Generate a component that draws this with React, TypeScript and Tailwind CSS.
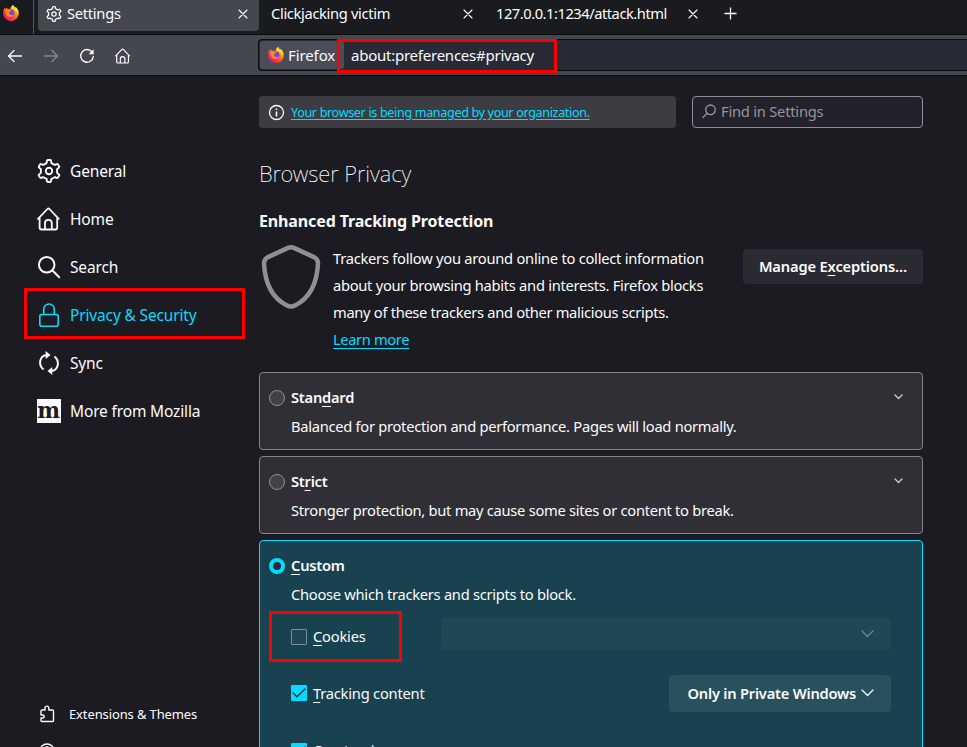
import type { ReactNode } from "react";

function Gear({ size }: { size: number }) {
  const petals = 6;
  const points: string[] = [];
  const step = 360 / petals;
  const at = (r: number, deg: number) => {
    const a = ((deg - 90) * Math.PI) / 180;
    return `${(12 + r * Math.cos(a)).toFixed(2)} ${(12 + r * Math.sin(a)).toFixed(2)}`;
  };
  for (let i = 0; i < petals; i++) {
    const c = i * step;
    points.push(`${i === 0 ? "M" : "L"}${at(8.6, c - 15)}`);
    points.push(`Q${at(11.4, c - 12)} ${at(11.1, c - 5)}`);
    points.push(`L${at(11.1, c + 5)}`);
    points.push(`Q${at(11.4, c + 12)} ${at(8.6, c + 15)}`);
    points.push(`Q${at(7.8, c + 30)} ${at(8.6, c + step - 15)}`);
  }
  return (
    <svg width={size} height={size} viewBox="0 0 24 24" fill="none" stroke="currentColor" strokeWidth="1.9" strokeLinejoin="round">
      <path d={points.join(" ") + "Z"} />
      <circle cx="12" cy="12" r="3.2" />
    </svg>
  );
}

function House({ size }: { size: number }) {
  return (
    <svg width={size} height={size} viewBox="0 0 24 24" fill="none" stroke="currentColor" strokeWidth="1.8" strokeLinecap="round" strokeLinejoin="round">
      <path d="M1 11.800 10.400 2q1-.9 2 0l9.400 9.800M2.600 10.500v10q0 2 2 2h13.600q2 0 2-2v-10M8 22v-6q0-3.200 3.400-3.200t3.400 3.200v6" />
    </svg>
  );
}

function Magnifier() {
  return (
    <svg width="24" height="24" viewBox="0 0 24 24" fill="none" stroke="currentColor" strokeWidth="2" strokeLinecap="round">
      <circle cx="9.700" cy="9.700" r="7.800" />
      <path d="m15.500 15.500 6.700 6.700" />
    </svg>
  );
}

function Lock() {
  return (
    <svg width="24" height="24" viewBox="0 0 24 24" fill="none" stroke="currentColor" strokeWidth="1.600">
      <rect x="2.800" y="11.500" width="18.400" height="11.700" rx="2" />
      <path d="M6.700 11.500V6.300a5.300 5.300 0 0 1 10.600 0v5.200" />
    </svg>
  );
}

function SyncArrows() {
  return (
    <svg width="24" height="24" viewBox="0 0 24 24" fill="none" stroke="currentColor" strokeWidth="2">
      <path d="M10 4C2.800 4.500.6 13.500 6.500 18.600M14 20c7.200-.5 9.400-9.500 3.500-14.600" />
      <path d="M8.700 0v8L13.500 4zM15.300 24v-8L10.500 20z" fill="currentColor" stroke="none" />
    </svg>
  );
}

function MozillaMark() {
  return (
    <span className="flex h-6 w-6 items-center justify-center bg-[#fbfbfe] text-[#1c1b22]">
      <span className="-mt-[3px] font-['DejaVu_Serif',serif] text-[22px] leading-6 font-bold [transform:scaleX(0.98)]">m</span>
    </span>
  );
}

function FirefoxLogo() {
  return (
    <svg width="16" height="16" viewBox="0 0 16 16">
      <defs>
        <linearGradient id="flame" x1="0.85" y1="0.1" x2="0.2" y2="0.95">
          <stop offset="0" stopColor="#fff44f" />
          <stop offset="0.35" stopColor="#ff980e" />
          <stop offset="0.7" stopColor="#ff3647" />
          <stop offset="1" stopColor="#e31587" />
        </linearGradient>
      </defs>
      <path d="M10.300 0c.2 1.300 1 2 2 2.800l.2-1c1.800 1.400 3.300 3.700 3.300 6.500A7.800 7.800 0 0 1 8 16 7.800 7.800 0 0 1 .2 8.200c0-2.300.5-4 1.600-5.600l.4 1.500 1.500-1.700.6 1.500c1.300-.2 2 .1 2.900.7C7.300 2.700 8.300.8 10.300 0z" fill="url(#flame)" />
      <circle cx="8" cy="8" r="3.500" fill="#7542e5" />
      <path d="M2.500 5.200c1.600-.8 3.200-.7 4.500.1l1.500.2c-.2 1-1.200 1.300-2 1.500-.9.800-.5 2.200.8 2.800 1.100.5 2.300.2 3.300-.5-.4 2-2 2.800-3.700 2.600-3-.3-4.500-2.800-4.400-6.700z" fill="#ff8a16" />
      <path d="M10.300 0c.2 1.300 1 2 2 2.800 1.500 1.300 2.600 3.100 2.300 5.400-.6-2.300-2.300-3.300-3.900-4.100C9 3.200 9 1.400 10.300 0z" fill="#ffe226" />
    </svg>
  );
}

function Cross() {
  return (
    <svg width="10" height="10" viewBox="0 0 10 10" fill="none" stroke="currentColor" strokeWidth="1.100" strokeLinecap="round">
      <path d="m1 1 8 8M9 1 1 9" />
    </svg>
  );
}

function Chevron({ size }: { size: "small" | "large" }) {
  return size === "small" ? (
    <svg width="9" height="6" viewBox="0 0 9 6" fill="none" stroke="currentColor" strokeWidth="1.300" strokeLinecap="round" strokeLinejoin="round">
      <path d="m1 1 3.500 3.500L8 1" />
    </svg>
  ) : (
    <svg width="13" height="8" viewBox="0 0 13 8" fill="none" stroke="currentColor" strokeWidth="1.300" strokeLinecap="round" strokeLinejoin="round">
      <path d="m1 1 5.500 5.500L12 1" />
    </svg>
  );
}

function Key({ children }: { children: ReactNode }) {
  return <span className="underline decoration-1 underline-offset-[3px]">{children}</span>;
}

function NavItem({ icon, label, active }: { icon: ReactNode; label: string; active?: boolean }) {
  return (
    <a className={`flex h-12 shrink-0 items-center gap-[9px] text-[15.500px] tracking-[-0.15px] ${active ? "text-[#00ddff]" : "text-[#fbfbfe]"}`}>
      {icon}
      <span className="mt-0.5">{label}</span>
    </a>
  );
}

function Radio({ on }: { on?: boolean }) {
  return (
    <span className={on ? "mt-px h-4 w-4 rounded-full border-[4.5px] border-[#00ddff] bg-[#2b2a33]" : "mt-px h-4 w-4 rounded-full border border-[#8f8f94] bg-[#424147]"} />
  );
}

function Checkbox({ on }: { on?: boolean }) {
  return on ? (
    <span className="mt-px flex h-4 w-4 items-center justify-center rounded-[1px] bg-[#00ddff] text-[#2b2a33]">
      <svg width="14" height="10" viewBox="0 0 14 10" fill="none" stroke="currentColor" strokeWidth="1.300" strokeLinecap="round" strokeLinejoin="round">
        <path d="m1 4.700 4 4L13 1" />
      </svg>
    </span>
  ) : (
    <span className="mt-px h-4 w-4 rounded-[1px] border border-[#768f99] bg-[#224552]" />
  );
}

function OptionCard({ title, text }: { title: ReactNode; text: string }) {
  return (
    <section className="h-[78px] rounded-[4px] border border-[#858489] bg-[#312f36] px-[9px] pt-3">
      <div className="flex h-6 items-center">
        <Radio />
        <h3 className="ml-1.5 font-semibold tracking-[-0.25px]">{title}</h3>
        <span className="mr-[10px] ml-auto text-[#ceced2]"><Chevron size="small" /></span>
      </div>
      <p className="mt-[5px] ml-[22px] leading-6">{text}</p>
    </section>
  );
}

export default function App() {
  return (
    <div className="relative h-[747px] w-[967px] overflow-hidden bg-[#1c1b22] font-['Noto_Sans',sans-serif] text-[14.700px] tracking-[-0.28px] text-[#fbfbfe]">
      <header>
        <div className="flex h-[35px] items-start border-b border-[#0c0c0d] bg-[#1a1b1f]">
          <div className="flex h-[34px] w-[34px] items-start border-r border-[#55575c] pt-[5px] pl-[3px]">
            <FirefoxLogo />
          </div>
          <div className="ml-1 flex h-[31px] w-[221px] items-center rounded-b-[4px] bg-[#44474d] pr-[11px] pb-1 pl-2">
            <Gear size={16} />
            <span className="ml-[5px]">Settings</span>
            <span className="ml-auto"><Cross /></span>
          </div>
          <div className="flex h-[31px] w-[225px] items-center pr-[11px] pb-1 pl-3">
            <span className="tracking-[-0.34px]">Clickjacking victim</span>
            <span className="ml-auto"><Cross /></span>
          </div>
          <div className="flex h-[31px] w-[225px] items-center pr-[11px] pb-1 pl-3">
            <span className="tracking-[-0.47px]">127.0.0.1:1234/attack.html</span>
            <span className="ml-auto"><Cross /></span>
          </div>
          <svg className="mt-[7px] ml-[15px]" width="13" height="13" viewBox="0 0 13 13" fill="none" stroke="currentColor" strokeWidth="1.300">
            <path d="M6.500.5v12M.5 6.500h12" />
          </svg>
        </div>
        <div className="flex h-[41px] items-center border-b border-[#0c0c0d] bg-[#44474d]">
          <svg className="mt-px ml-[7px]" width="16" height="14" viewBox="0 0 16 14" fill="none" stroke="currentColor" strokeWidth="1.300" strokeLinecap="round" strokeLinejoin="round">
            <path d="M14.500 7H1.500M7 1.500 1.500 7 7 12.500" />
          </svg>
          <svg className="mt-px ml-5 text-[#85878b]" width="16" height="14" viewBox="0 0 16 14" fill="none" stroke="currentColor" strokeWidth="1.300" strokeLinecap="round" strokeLinejoin="round">
            <path d="M1.500 7h13M9 1.500 14.500 7 9 12.500" />
          </svg>
          <svg className="mt-px ml-5" width="16" height="16" viewBox="0 0 16 16" fill="none" stroke="currentColor" strokeWidth="1.400" strokeLinecap="round">
            <path d="M13 4A6.300 6.300 0 1 0 14.300 8.500" />
            <path d="M14.600 1.300v5H9.600z" fill="currentColor" stroke="none" />
          </svg>
          <span className="mt-px ml-5"><House size={16} /></span>
          <div className="ml-[127px] flex h-8 flex-1 items-center rounded-l-[4px] border border-r-0 border-[#0c0c0d] bg-[#282a36]">
            <div className="ml-px flex h-[28px] w-[84px] items-center rounded-[3px] bg-[#4b4d58] pl-2">
              <FirefoxLogo />
              <span className="ml-1 text-[15px] tracking-[-0.1px]">Firefox</span>
            </div>
            <span className="ml-[7px] text-[15px] tracking-[-0.24px]">about:preferences#privacy</span>
          </div>
        </div>
      </header>

      <div className="flex h-[671px]">
        <nav className="flex w-[259px] flex-col pt-[71px] pl-[37px]">
          <NavItem icon={<Gear size={24} />} label="General" />
          <NavItem icon={<House size={24} />} label="Home" />
          <NavItem icon={<Magnifier />} label="Search" />
          <NavItem icon={<Lock />} label="Privacy & Security" active />
          <NavItem icon={<SyncArrows />} label="Sync" />
          <NavItem icon={<MozillaMark />} label="More from Mozilla" />
          <div className="mt-[261px] flex h-9 shrink-0 items-center pl-[2px] text-[13px] tracking-[-0.12px]">
            <svg width="17" height="18" viewBox="0 0 17 18" fill="none" stroke="currentColor" strokeWidth="1.400" strokeLinejoin="round">
              <path d="M2 8V6q0-1 1-1h3V3a1.900 1.900 0 0 1 3.800 0v2h3.700q1 0 1 1v9.500q0 1-1 1H3q-1 0-1-1V13h1.700a1.500 1.500 0 0 0 0-3H2z" />
            </svg>
            <span className="mt-0.5 ml-[13px]">Extensions &amp; Themes</span>
          </div>
          <svg className="mt-[11px] ml-[2px] shrink-0" width="16" height="16" viewBox="0 0 16 16" fill="none" stroke="currentColor" strokeWidth="1.400">
            <circle cx="8" cy="8" r="7" />
            <path d="M5.500 6.500a2.500 2.500 0 1 1 3.500 2.300q-1 .5-1 1.700" />
          </svg>
        </nav>

        <main className="w-[664px]">
          <div className="flex gap-4 pt-5">
            <div className="flex h-8 w-[417px] items-center rounded-[4px] bg-[#3d3c42] pl-[9px]">
              <svg width="17" height="17" viewBox="0 0 17 17" fill="none" stroke="currentColor" strokeWidth="1.300">
                <circle cx="8.500" cy="8.500" r="7" />
                <path d="M8.500 7.500v5M8.500 4.500V6" strokeWidth="1.500" />
              </svg>
              <a className="mt-0.5 ml-1.5 text-[12.600px] tracking-[-0.35px] text-[#00ddff] underline underline-offset-2">Your browser is being managed by your organization.</a>
            </div>
            <div className="flex h-8 w-[231px] items-center rounded-[4px] border border-[#8f8f94] bg-[#23222b] pl-[9px] text-[#96959c]">
              <svg className="-mt-0.5" width="15" height="15" viewBox="0 0 15 15" fill="none" stroke="currentColor" strokeWidth="1.300" strokeLinecap="round">
                <circle cx="8.500" cy="5.800" r="4.800" />
                <path d="M5 9.300 1 13.500" />
              </svg>
              <span className="-mt-px ml-1 tracking-[-0.22px]">Find in Settings</span>
            </div>
          </div>
          <h1 className="mt-[29px] text-[22px] leading-8 font-extralight tracking-[-0.07px] text-[#fbfbfe]">Browser Privacy</h1>
          <h2 className="mt-5 text-base leading-6 font-bold tracking-[-0.13px]">Enhanced Tracking Protection</h2>
          <div className="mt-3 flex">
            <svg className="mr-[10px] shrink-0" width="64" height="64" viewBox="0 0 64 64" fill="none" stroke="#8f8f94" strokeWidth="4.500" strokeLinejoin="round">
              <path d="M29 2.900q3-1.200 6 0l20.500 9.500q3.600 2 3.500 6C58 39 51 53 36 60.500q-4 2-8 0C13 53 6 39 5 18.400q0-4 3.500-6z" />
            </svg>
            <p className="w-[395px] leading-[27px]">
              <span className="tracking-[-0.25px]">Trackers follow you around online to collect information</span><br />
              about your browsing habits and interests. Firefox blocks<br />
              <span className="tracking-[-0.31px]">many of these trackers and other malicious scripts.</span><br />
              <a className="tracking-[-0.38px] text-[#00ddff] underline underline-offset-[3px]">Learn more</a>
            </p>
            <button className="mt-1 ml-auto flex h-[35px] w-[180px] items-center justify-center rounded-[4px] bg-[#2b2a32] font-semibold tracking-[-0.16px]">
              <span>Manage E<Key>x</Key>ceptions…</span>
            </button>
          </div>
          <div className="mt-[19px] flex flex-col gap-1.5">
            <OptionCard title={<>Stan<Key>d</Key>ard</>} text="Balanced for protection and performance. Pages will load normally." />
            <OptionCard title={<>St<Key>r</Key>ict</>} text="Stronger protection, but may cause some sites or content to break." />
            <section className="h-[260px] rounded-[4px] border border-[#00ddff] bg-[#18424f] px-[9px] pt-3">
              <div className="flex h-6 items-center gap-1.5">
                <Radio on />
                <h3 className="font-semibold tracking-[-0.25px]"><Key>C</Key>ustom</h3>
              </div>
              <p className="mt-[5px] ml-[22px] leading-6">Choose which trackers and scripts to block.</p>
              <div className="mt-3 ml-[22px] flex w-[600px] items-center justify-between">
                <label className="mt-[5px] flex items-center gap-1.5 tracking-[-0.2px]"><Checkbox /><span><Key>C</Key>ookies</span></label>
                <span className="flex h-8 w-[450px] items-center justify-end rounded-[4px] bg-[#1f4854] pr-[17px] text-[#70888f]"><Chevron size="large" /></span>
              </div>
              <div className="mt-6 ml-[22px] flex h-[38px] w-[600px] items-center justify-between">
                <label className="flex items-center gap-1.5 tracking-[-0.22px]"><Checkbox on /><span><Key>T</Key>racking content</span></label>
                <span className="flex h-[37px] w-[222px] items-center justify-end gap-[5px] rounded-[4px] bg-[#28505d] pr-[17px] font-semibold tracking-[-0.23px]">
                  <span>Only in Private Windows</span><Chevron size="large" />
                </span>
              </div>
              <label className="mt-[27px] ml-[22px] flex items-center gap-1.5"><Checkbox on /><span>Cryptominers</span></label>
            </section>
          </div>
        </main>
      </div>

      <div className="absolute top-[39px] left-[337px] h-[34px] w-[220px] border-3 border-[#ff0000]" />
      <div className="absolute top-[288px] left-6 h-[51px] w-[221px] border-3 border-[#ff0000]" />
      <div className="absolute top-[611px] left-[269px] h-[51px] w-[133px] border-3 border-[#ff0000]" />
    </div>
  );
}
